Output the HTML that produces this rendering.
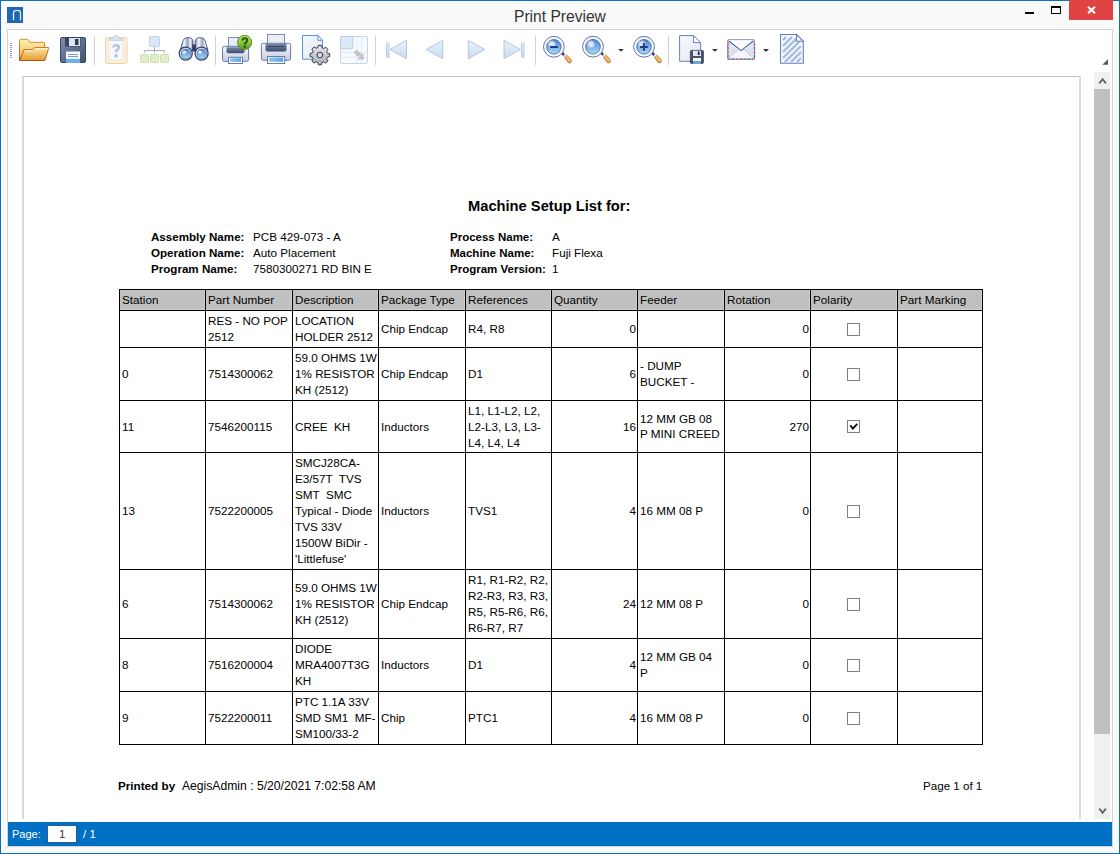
<!DOCTYPE html>
<html><head><meta charset="utf-8">
<style>
*{margin:0;padding:0;box-sizing:border-box}
html,body{width:1120px;height:854px;overflow:hidden;background:#fafafa;font-family:"Liberation Sans",sans-serif}
.abs{position:absolute}
.cell{display:flex;align-items:center;font-size:11.7px;line-height:16px;color:#000;white-space:pre}
.cell span{display:block;width:100%}
.cb{width:13px;height:13px;border:1px solid #808080;background:#fff}
.t{position:absolute;white-space:nowrap;color:#000}
</style></head><body>
<div class="abs" style="left:0;top:0;width:1120px;height:1px;background:#0b6fc7"></div>
<div class="abs" style="left:0;top:0;width:1px;height:854px;background:#0b6fc7"></div>
<div class="abs" style="left:1119px;top:0;width:1px;height:854px;background:#0b6fc7"></div>
<div class="abs" style="left:0;top:853px;width:1120px;height:1px;background:#0b6fc7"></div>
<svg class="abs" style="left:7px;top:7px" width="16" height="16" viewBox="0 0 16 16"><rect width="16" height="16" fill="#1f68b4"/><path d="M6.5 13.3V6Q6.5 3.5 9 3.5H11Q13.5 3.5 13.5 6V13.3" fill="none" stroke="#fff" stroke-width="1.2"/></svg>
<div class="t" style="left:514px;top:8px;font-size:15.6px;line-height:18px;color:#333">Print Preview</div>
<div class="abs" style="left:1025px;top:12px;width:9px;height:2px;background:#000"></div>
<div class="abs" style="left:1051px;top:6px;width:10px;height:8px;border:1px solid #000;border-top-width:2px"></div>
<div class="abs" style="left:1069px;top:0;width:44px;height:20px;background:#e04343"></div>
<svg class="abs" style="left:1087px;top:6px" width="9" height="8" viewBox="0 0 9 8"><path d="M1 0.7L8 7.3M8 0.7L1 7.3" stroke="#fff" stroke-width="2"/></svg>
<div class="abs" style="left:7px;top:29px;width:1106px;height:818px;background:#fff;border:1px solid #d4d4d4"></div>
<svg class="abs" style="left:0;top:0" width="1120" height="76" viewBox="0 0 1120 76">
<defs>
<linearGradient id="gFold" x1="0" y1="0" x2="0" y2="1"><stop offset="0" stop-color="#fff0b0"/><stop offset="1" stop-color="#f0b050"/></linearGradient>
<linearGradient id="gFoldS" gradientUnits="userSpaceOnUse" x1="0" y1="39" x2="0" y2="61"><stop offset="0" stop-color="#d8913a"/><stop offset="1" stop-color="#a9581c"/></linearGradient>
<linearGradient id="gFold2" x1="0" y1="0" x2="0" y2="1"><stop offset="0" stop-color="#fde8a8"/><stop offset="1" stop-color="#e8982e"/></linearGradient>
<linearGradient id="gFlop" x1="0" y1="0" x2="1" y2="1"><stop offset="0" stop-color="#7f8fae"/><stop offset="1" stop-color="#44506e"/></linearGradient>
<linearGradient id="gBarrel" x1="0" y1="0" x2="1" y2="0"><stop offset="0" stop-color="#7c88a4"/><stop offset="0.3" stop-color="#f8faff"/><stop offset="0.55" stop-color="#9aa6bf"/><stop offset="0.8" stop-color="#eef2f8"/><stop offset="1" stop-color="#5a6686"/></linearGradient>
<radialGradient id="gHi" cx="0.5" cy="0.5" r="0.5"><stop offset="0" stop-color="#f4f0fa" stop-opacity="1"/><stop offset="0.6" stop-color="#e4e6f6" stop-opacity="0.8"/><stop offset="1" stop-color="#d8e0f4" stop-opacity="0"/></radialGradient>
<linearGradient id="gSilver" x1="0" y1="0" x2="1" y2="0"><stop offset="0" stop-color="#e8edf5"/><stop offset="1" stop-color="#b8c4d8"/></linearGradient>
<linearGradient id="gLens" x1="0" y1="0" x2="0" y2="1"><stop offset="0" stop-color="#4f82d8"/><stop offset="1" stop-color="#a8dcf0"/></linearGradient>
<linearGradient id="gPrn" x1="0" y1="0" x2="0" y2="1"><stop offset="0" stop-color="#f4f6fb"/><stop offset="1" stop-color="#c4cde2"/></linearGradient>
<linearGradient id="gSlot" x1="0" y1="0" x2="0" y2="1"><stop offset="0" stop-color="#7888a8"/><stop offset="1" stop-color="#3e4a6c"/></linearGradient>
<linearGradient id="gTray" x1="0" y1="0" x2="1" y2="0"><stop offset="0" stop-color="#8ec8f0"/><stop offset="1" stop-color="#5aa0e0"/></linearGradient>
<linearGradient id="gGreen" x1="0" y1="0" x2="0" y2="1"><stop offset="0" stop-color="#b8e468"/><stop offset="0.5" stop-color="#8cc83a"/><stop offset="1" stop-color="#5e9a22"/></linearGradient>
<linearGradient id="gNav" x1="0" y1="0" x2="0" y2="1"><stop offset="0" stop-color="#eaf2fb"/><stop offset="1" stop-color="#c8dcf0"/></linearGradient>
<linearGradient id="gGear" x1="0" y1="0" x2="0" y2="1"><stop offset="0" stop-color="#e4e7ec"/><stop offset="1" stop-color="#a8adb6"/></linearGradient>
<linearGradient id="gHandle" x1="0" y1="1" x2="1" y2="0"><stop offset="0" stop-color="#d8882c"/><stop offset="0.6" stop-color="#f4c070"/><stop offset="1" stop-color="#fdf0d0"/></linearGradient>
<linearGradient id="gPage" x1="0" y1="0" x2="1" y2="1"><stop offset="0" stop-color="#f8faff"/><stop offset="1" stop-color="#dfe6f3"/></linearGradient>
</defs>
<!-- grip -->
<g fill="#999"><rect x="10" y="43" width="2" height="1"/><rect x="10" y="45" width="2" height="1"/><rect x="10" y="47" width="2" height="1"/><rect x="10" y="49" width="2" height="1"/><rect x="10" y="51" width="2" height="1"/><rect x="10" y="53" width="2" height="1"/><rect x="10" y="55" width="2" height="1"/><rect x="10" y="57" width="2" height="1"/></g>
<!-- folder -->
<path d="M19.5 40.3Q19.5 39.3 20.5 39.3H27.8L29.8 42.3H43.8Q44.6 42.3 44.6 43.1V47.5H34.6L32.8 49.5H24.2L20.5 60.5H19.5Z" fill="url(#gFold)" stroke="url(#gFoldS)" stroke-width="1"/>
<path d="M24.2 49.5H32.9L34.6 47.5H48.2Q49 47.5 48.7 48.4L44.8 60.5H19.8Z" fill="url(#gFold2)" stroke="url(#gFoldS)" stroke-width="1"/>
<path d="M25 50.6H33.3L35 48.6H47.6" fill="none" stroke="#fff8e0" stroke-width="0.8" opacity="0.9"/>
<!-- floppy -->
<rect x="60.5" y="37.5" width="25" height="25" rx="1.5" fill="url(#gFlop)" stroke="#3c4868"/>
<rect x="65" y="37.5" width="15.5" height="9" fill="#3a4560"/>
<rect x="69" y="38" width="11" height="8" fill="#dfe5ef"/>
<rect x="75" y="39" width="3.5" height="6" fill="#2f3a58"/>
<rect x="66" y="51.5" width="14" height="11" fill="#fbfcff"/>
<rect x="66" y="58.8" width="14" height="3.7" fill="#6ab0e6"/>
<rect x="68" y="54" width="10" height="0.9" fill="#7c88b8"/><rect x="68" y="56" width="10" height="0.9" fill="#7c88b8"/>
<!-- sep -->
<rect x="94" y="36" width="1" height="29" fill="#d0d0d0"/>
<!-- clipboard -->
<rect x="105.5" y="37.5" width="21.5" height="26" rx="1.5" fill="#fcefd6" stroke="#efd3ad"/>
<rect x="109" y="38.5" width="14" height="21.5" fill="#f6f8fc" stroke="#e8e2d8" stroke-width="0.6"/>
<path d="M109.3 40.3Q109.3 38 113 38Q114 35.2 116 35.2Q118 35.2 119 38Q122.7 38 122.7 40.3Z" fill="#e2e7ef" stroke="#bcc4d4" stroke-width="0.8"/>
<path d="M113.5 47.6Q113.5 45.1 116.1 45.1Q118.8 45.1 118.8 47.4Q118.8 48.9 117.2 49.8Q116.1 50.4 116.1 52.4" fill="none" stroke="#b7bfdb" stroke-width="2.3"/>
<circle cx="116.1" cy="55.9" r="1.8" fill="#b7bfdb"/>
<!-- org chart -->
<rect x="149.5" y="36.5" width="10" height="10" rx="1.3" fill="#dae8f6" stroke="#bcd2ec"/>
<path d="M154.5 47V52.7M144.5 52.7V50.5H164.5V52.7" fill="none" stroke="#a8b0c0" stroke-width="1"/>
<rect x="140.5" y="54.5" width="8" height="8" rx="1.2" fill="#e0eecb" stroke="#cadfac"/>
<rect x="150.5" y="54.5" width="8" height="8" rx="1.2" fill="#e0eecb" stroke="#cadfac"/>
<rect x="160.5" y="54.5" width="8" height="8" rx="1.2" fill="#e0eecb" stroke="#cadfac"/>
<!-- binoculars -->
<path d="M180.2 50.5L183 40.8Q183.6 37.6 188 37.6Q192.5 37.6 192.9 40.8L193.2 50.5Z" fill="url(#gBarrel)" stroke="#4a5878" stroke-width="0.9"/>
<path d="M195 50.5L195.3 40.8Q195.7 37.6 200.2 37.6Q204.6 37.6 205.2 40.8L208 50.5Z" fill="url(#gBarrel)" stroke="#4a5878" stroke-width="0.9"/>
<rect x="192.3" y="44.5" width="3.6" height="7" fill="#34405e"/>
<circle cx="185.75" cy="53.6" r="6.5" fill="#f2f5fb" stroke="#35446a" stroke-width="1.3"/>
<circle cx="201.6" cy="53.6" r="6.5" fill="#f2f5fb" stroke="#35446a" stroke-width="1.3"/>
<circle cx="185.9" cy="53.85" r="4.8" fill="url(#gLens)" stroke="#3a62b4" stroke-width="0.6"/>
<circle cx="201.75" cy="53.85" r="4.8" fill="url(#gLens)" stroke="#3a62b4" stroke-width="0.6"/>
<ellipse cx="184.3" cy="52.2" rx="1.9" ry="1.6" fill="#f4eefa" opacity="0.9"/>
<ellipse cx="200.1" cy="52.2" rx="1.9" ry="1.6" fill="#f4eefa" opacity="0.9"/>
<!-- sep -->
<rect x="215" y="36" width="1" height="29" fill="#d0d0d0"/>
<!-- printer help -->
<rect x="228.5" y="37.5" width="10" height="11" fill="#e9edf5" stroke="#7b8ab8"/>
<path d="M224.3 46.3H246.8Q248.6 46.3 248.6 48.3V59.5Q248.6 61.3 246.8 61.3H224.3Q222.5 61.3 222.5 59.5V48.3Q222.5 46.3 224.3 46.3Z" fill="url(#gPrn)" stroke="#6a7aa8"/>
<path d="M226.5 47.2H244.5V51.5Q244.5 53.3 242.7 53.3H228.3Q226.5 53.3 226.5 51.5Z" fill="url(#gSlot)"/>
<rect x="228.5" y="57.3" width="14" height="6.2" fill="#fff" stroke="#6a7aa8"/>
<rect x="230" y="58.3" width="11" height="3.5" fill="url(#gTray)"/>
<circle cx="244.6" cy="42.4" r="7.1" fill="url(#gGreen)" stroke="#4f8a1c" stroke-width="0.9"/>
<path d="M242.4 40.6Q242.4 38.2 244.8 38.2Q247.2 38.2 247.2 40.3Q247.2 41.6 245.9 42.3Q244.8 42.9 244.8 44.6" fill="none" stroke="#2a560e" stroke-width="2"/>
<circle cx="244.8" cy="46.6" r="1.3" fill="#2a560e"/>
<!-- printer -->
<rect x="267.5" y="34.5" width="17" height="12" fill="#e9edf5" stroke="#7b8ab8"/>
<path d="M263.3 43.3H288.7Q290.6 43.3 290.6 45.3V58.5Q290.6 60.3 288.7 60.3H263.3Q261.4 60.3 261.4 58.5V45.3Q261.4 43.3 263.3 43.3Z" fill="url(#gPrn)" stroke="#6a7aa8"/>
<path d="M265.5 43.8H286.5V49.5Q286.5 51.5 284.5 51.5H267.5Q265.5 51.5 265.5 49.5Z" fill="url(#gSlot)"/>
<rect x="268" y="46" width="16" height="0.8" fill="#2f3a58"/>
<rect x="267.5" y="56.5" width="17.2" height="7" fill="#fff" stroke="#6a7aa8"/>
<rect x="269" y="57.5" width="14.2" height="4.3" fill="url(#gTray)"/>
<!-- page setup -->
<path d="M302.5 35.5H317.8L322.5 40.3V59.2H302.5Z" fill="url(#gPage)" stroke="#5b95d6"/>
<path d="M317.8 35.5V40.3H322.5Z" fill="#fff" stroke="#5b95d6"/>
<g transform="translate(319.9 55)">
<path d="M-1.6-9.6H1.6L2.1-7.3L3.9-6.5L5.9-7.8L8.1-5.6L6.8-3.6L7.5-1.8L9.8-1.4V1.6L7.5 2.1L6.7 3.9L8.1 5.9L5.8 8.1L3.8 6.8L2.1 7.5L1.6 9.8H-1.6L-2.1 7.5L-3.9 6.7L-5.9 8.1L-8.1 5.8L-6.8 3.8L-7.5 2.1L-9.8 1.6V-1.6L-7.5-2.1L-6.7-3.9L-8.1-5.9L-5.8-8.1L-3.8-6.8L-2.1-7.5Z" fill="url(#gGear)" stroke="#3c3c3c" stroke-width="1"/>
<circle r="2.8" fill="#d4dbe6" stroke="#444" stroke-width="1.1"/>
</g>
<!-- scale -->
<rect x="340.5" y="36.5" width="27" height="27" rx="1.5" fill="#f7fafe" stroke="#c2d5ec"/>
<rect x="340.5" y="36.5" width="12.3" height="12.3" rx="1" fill="#dde9f8" stroke="#b8cce6"/>
<path d="M356.7 37V63M361.5 37V63M341 52.5H367M341 57.3H367" stroke="#dbe6f4" stroke-width="0.8"/>
<path d="M354.5 51.5L358.5 55.5" stroke="#c4c4c4" stroke-width="3"/>
<path d="M357.1 59.6H363.8V53Z" fill="#c4c4c4"/>
<path d="M355.5 50.5L361 56" stroke="#c4c4c4" stroke-width="3.2"/>
<!-- sep -->
<rect x="375" y="36" width="1" height="29" fill="#d0d0d0"/>
<!-- nav -->
<rect x="386.5" y="42.5" width="2.5" height="15" rx="1" fill="url(#gNav)" stroke="#aac2e0" stroke-width="0.8"/>
<path d="M406.5 40.3V58.7L390 49.5Z" fill="url(#gNav)" stroke="#aac2e0" stroke-width="0.9"/>
<path d="M442.8 40.3V58.7L426.3 49.5Z" fill="url(#gNav)" stroke="#aac2e0" stroke-width="0.9"/>
<path d="M468.3 40.3V58.7L484.8 49.5Z" fill="url(#gNav)" stroke="#aac2e0" stroke-width="0.9"/>
<path d="M504 40.3V58.7L520.5 49.5Z" fill="url(#gNav)" stroke="#aac2e0" stroke-width="0.9"/>
<rect x="521.5" y="42.5" width="2.5" height="15" rx="1" fill="url(#gNav)" stroke="#aac2e0" stroke-width="0.8"/>
<!-- sep -->
<rect x="535" y="36" width="1" height="29" fill="#d0d0d0"/>
<!-- zoom out -->
<path d="M560.8 53.2L562.8 51.6L565.2 54.6L563.2 56.2Z" fill="#34488a"/>
<path d="M564.2 57L566.4 54.8L570.8 59.4Q572 61 570.9 62.4Q569.6 63.6 568.1 62.4Z" fill="url(#gHandle)" stroke="#a8581a" stroke-width="0.7"/>
<path d="M563.3 56.1L565.5 53.9L566.5 54.9L564.3 57.1Z" fill="#f0f4fb"/>
<circle cx="553.9" cy="46.8" r="10.4" fill="#f8f9fd" stroke="#56689a" stroke-width="0.9"/>
<circle cx="553.9" cy="46.8" r="7.3" fill="url(#gLens)" stroke="#3a5fae" stroke-width="0.8"/>
<circle cx="551.8" cy="44.3" r="4.4" fill="url(#gHi)"/>
<rect x="550.1" y="46" width="7.8" height="2" fill="#1c3d8c"/>
<!-- zoom -->
<g transform="translate(39.1 -0.1)">
<path d="M560.8 53.2L562.8 51.6L565.2 54.6L563.2 56.2Z" fill="#34488a"/>
<path d="M564.2 57L566.4 54.8L570.8 59.4Q572 61 570.9 62.4Q569.6 63.6 568.1 62.4Z" fill="url(#gHandle)" stroke="#a8581a" stroke-width="0.7"/>
<path d="M563.3 56.1L565.5 53.9L566.5 54.9L564.3 57.1Z" fill="#f0f4fb"/>
<circle cx="553.9" cy="46.8" r="10.4" fill="#f8f9fd" stroke="#56689a" stroke-width="0.9"/>
<circle cx="553.9" cy="46.8" r="7.3" fill="url(#gLens)" stroke="#3a5fae" stroke-width="0.8"/>
<circle cx="551.8" cy="44.3" r="4.4" fill="url(#gHi)"/>
</g>
<path d="M618.2 49H623.8L621 51.8Z" fill="#333"/>
<!-- zoom in -->
<g transform="translate(90.1 0)">
<path d="M560.8 53.2L562.8 51.6L565.2 54.6L563.2 56.2Z" fill="#34488a"/>
<path d="M564.2 57L566.4 54.8L570.8 59.4Q572 61 570.9 62.4Q569.6 63.6 568.1 62.4Z" fill="url(#gHandle)" stroke="#a8581a" stroke-width="0.7"/>
<path d="M563.3 56.1L565.5 53.9L566.5 54.9L564.3 57.1Z" fill="#f0f4fb"/>
<circle cx="553.9" cy="46.8" r="10.4" fill="#f8f9fd" stroke="#56689a" stroke-width="0.9"/>
<circle cx="553.9" cy="46.8" r="7.3" fill="url(#gLens)" stroke="#3a5fae" stroke-width="0.8"/>
<circle cx="551.8" cy="44.3" r="4.4" fill="url(#gHi)"/>
</g>
<path d="M640 46.9H647.8M643.9 43.1V50.7" stroke="#1c3d8c" stroke-width="2"/>
<!-- sep -->
<rect x="668" y="36" width="1" height="29" fill="#d0d0d0"/>
<!-- export -->
<path d="M679.6 35.6H693.6L700.6 42.6V61.3H679.6Z" fill="url(#gPage)" stroke="#6b7fb8"/>
<path d="M693.6 35.6V42.6H700.6Z" fill="#fff" stroke="#6b7fb8"/>
<rect x="690.4" y="50.4" width="13" height="13" rx="1" fill="#46526f" stroke="#343e58" stroke-width="0.8"/>
<rect x="693" y="50.8" width="8" height="5.2" fill="#e4e9f1"/>
<rect x="697.8" y="51.5" width="1.8" height="3.5" fill="#1e2740"/>
<rect x="693" y="58" width="8" height="5.4" fill="#fbfcff"/>
<rect x="693" y="61" width="8" height="2.4" fill="#5ea8e4"/>
<path d="M712 48.9H717.8L714.9 51.8Z" fill="#333"/>
<!-- envelope -->
<rect x="727.6" y="39.6" width="27" height="19.6" rx="1" fill="#f3f5fa" stroke="#8da0cc" stroke-width="1"/>
<path d="M728.2 41.5L737.8 50.5L728.2 58.6Z" fill="#dde2ee"/>
<path d="M754 41.5L744.4 50.5L754 58.6Z" fill="#dde2ee"/>
<path d="M728.3 58.7L738 49.5M754 58.7L744.3 49.5" stroke="#b8c2da" stroke-width="0.8"/>
<path d="M728.5 40.6L741.1 50.6L753.7 40.6Z" fill="#fbfcfe"/>
<path d="M728.5 40.8L741.1 50.6L753.7 40.8" fill="none" stroke="#4a5fa0" stroke-width="1.1"/>
<path d="M728.1 42.5V59.1H754.5V42.5" fill="none" stroke="#d84a4a" stroke-width="1.2" stroke-dasharray="3 5"/>
<path d="M728.1 42.5V59.1H754.5V42.5" fill="none" stroke="#4a66bc" stroke-width="1.2" stroke-dasharray="3 5" stroke-dashoffset="-4"/>
<path d="M763 49H768.9L766 51.9Z" fill="#333"/>
<!-- watermark -->
<path d="M780.5 34.5H796.5L803.3 41.3V63.3H780.5Z" fill="#f4f6fb" stroke="#6c80ba" stroke-width="1.1"/>
<g stroke="#a6bbe0" stroke-width="2.3">
<path d="M783 40L786 37M783 46L792 37M783 52L797 38M783 58L800 41M785 62L801 46M791 62L801 52M797 62L801 58"/>
</g>
<path d="M796.5 34.5V41.3H803.3Z" fill="#fff" stroke="#6c80ba" stroke-width="1.1"/>
<!-- overflow triangle -->
<path d="M1108 59.3V64.8H1102.3Z" fill="#555"/>
</svg>

<div class="abs" style="left:22px;top:76px;width:1059px;height:760px;background:#fff;border-top:1px solid #c4c4c4;border-left:2px solid #dadada;border-right:2px solid #dadada"></div>
<div class="t" style="left:468px;top:197px;font-size:14.7px;line-height:18px;font-weight:bold">Machine Setup List for:</div>
<div class="t" style="left:151px;top:229px;font-size:11.6px;line-height:16px;font-weight:bold">Assembly Name:</div>
<div class="t" style="left:151px;top:245px;font-size:11.6px;line-height:16px;font-weight:bold">Operation Name:</div>
<div class="t" style="left:151px;top:261px;font-size:11.6px;line-height:16px;font-weight:bold">Program Name:</div>
<div class="t" style="left:253px;top:229px;font-size:11.7px;line-height:16px">PCB 429-073 - A</div>
<div class="t" style="left:253px;top:245px;font-size:11.7px;line-height:16px">Auto Placement</div>
<div class="t" style="left:253px;top:261px;font-size:11.7px;line-height:16px">7580300271 RD BIN E</div>
<div class="t" style="left:450px;top:229px;font-size:11.5px;line-height:16px;font-weight:bold">Process Name:</div>
<div class="t" style="left:450px;top:245px;font-size:11.5px;line-height:16px;font-weight:bold">Machine Name:</div>
<div class="t" style="left:450px;top:261px;font-size:11.5px;line-height:16px;font-weight:bold">Program Version:</div>
<div class="t" style="left:552px;top:229px;font-size:11.7px;line-height:16px">A</div>
<div class="t" style="left:552px;top:245px;font-size:11.7px;line-height:16px">Fuji Flexa</div>
<div class="t" style="left:552px;top:261px;font-size:11.7px;line-height:16px">1</div>
<div class="abs" style="left:119px;top:289px;width:864px;height:21px;background:#c0c0c0"></div>
<div class="abs" style="left:120px;top:290px;width:85px;height:20px;border-right:1px solid #d0d0d0;border-bottom:1px solid #d0d0d0"></div>
<div class="abs" style="left:206px;top:290px;width:86px;height:20px;border-right:1px solid #d0d0d0;border-bottom:1px solid #d0d0d0"></div>
<div class="abs" style="left:293px;top:290px;width:85px;height:20px;border-right:1px solid #d0d0d0;border-bottom:1px solid #d0d0d0"></div>
<div class="abs" style="left:379px;top:290px;width:86px;height:20px;border-right:1px solid #d0d0d0;border-bottom:1px solid #d0d0d0"></div>
<div class="abs" style="left:466px;top:290px;width:85px;height:20px;border-right:1px solid #d0d0d0;border-bottom:1px solid #d0d0d0"></div>
<div class="abs" style="left:552px;top:290px;width:85px;height:20px;border-right:1px solid #d0d0d0;border-bottom:1px solid #d0d0d0"></div>
<div class="abs" style="left:638px;top:290px;width:86px;height:20px;border-right:1px solid #d0d0d0;border-bottom:1px solid #d0d0d0"></div>
<div class="abs" style="left:725px;top:290px;width:85px;height:20px;border-right:1px solid #d0d0d0;border-bottom:1px solid #d0d0d0"></div>
<div class="abs" style="left:811px;top:290px;width:86px;height:20px;border-right:1px solid #d0d0d0;border-bottom:1px solid #d0d0d0"></div>
<div class="abs" style="left:898px;top:290px;width:84px;height:20px;border-right:1px solid #d0d0d0;border-bottom:1px solid #d0d0d0"></div>
<div class="abs" style="left:119px;top:289px;width:864px;height:1px;background:#000"></div>
<div class="abs" style="left:119px;top:310px;width:864px;height:1px;background:#000"></div>
<div class="abs" style="left:119px;top:347px;width:864px;height:1px;background:#000"></div>
<div class="abs" style="left:119px;top:400px;width:864px;height:1px;background:#000"></div>
<div class="abs" style="left:119px;top:452px;width:864px;height:1px;background:#000"></div>
<div class="abs" style="left:119px;top:569px;width:864px;height:1px;background:#000"></div>
<div class="abs" style="left:119px;top:638px;width:864px;height:1px;background:#000"></div>
<div class="abs" style="left:119px;top:691px;width:864px;height:1px;background:#000"></div>
<div class="abs" style="left:119px;top:744px;width:864px;height:1px;background:#000"></div>
<div class="abs" style="left:119px;top:289px;width:1px;height:456px;background:#000"></div>
<div class="abs" style="left:205px;top:289px;width:1px;height:456px;background:#000"></div>
<div class="abs" style="left:292px;top:289px;width:1px;height:456px;background:#000"></div>
<div class="abs" style="left:378px;top:289px;width:1px;height:456px;background:#000"></div>
<div class="abs" style="left:465px;top:289px;width:1px;height:456px;background:#000"></div>
<div class="abs" style="left:551px;top:289px;width:1px;height:456px;background:#000"></div>
<div class="abs" style="left:637px;top:289px;width:1px;height:456px;background:#000"></div>
<div class="abs" style="left:724px;top:289px;width:1px;height:456px;background:#000"></div>
<div class="abs" style="left:810px;top:289px;width:1px;height:456px;background:#000"></div>
<div class="abs" style="left:897px;top:289px;width:1px;height:456px;background:#000"></div>
<div class="abs" style="left:982px;top:289px;width:1px;height:456px;background:#000"></div>
<div class="abs cell" style="left:120px;top:290px;width:85px;height:20px;text-align:left;padding-left:2px;"><span>Station</span></div>
<div class="abs cell" style="left:206px;top:290px;width:86px;height:20px;text-align:left;padding-left:2px;"><span>Part Number</span></div>
<div class="abs cell" style="left:293px;top:290px;width:85px;height:20px;text-align:left;padding-left:2px;"><span>Description</span></div>
<div class="abs cell" style="left:379px;top:290px;width:86px;height:20px;text-align:left;padding-left:2px;"><span>Package Type</span></div>
<div class="abs cell" style="left:466px;top:290px;width:85px;height:20px;text-align:left;padding-left:2px;"><span>References</span></div>
<div class="abs cell" style="left:552px;top:290px;width:85px;height:20px;text-align:left;padding-left:2px;"><span>Quantity</span></div>
<div class="abs cell" style="left:638px;top:290px;width:86px;height:20px;text-align:left;padding-left:2px;"><span>Feeder</span></div>
<div class="abs cell" style="left:725px;top:290px;width:85px;height:20px;text-align:left;padding-left:2px;"><span>Rotation</span></div>
<div class="abs cell" style="left:811px;top:290px;width:86px;height:20px;text-align:left;padding-left:2px;"><span>Polarity</span></div>
<div class="abs cell" style="left:898px;top:290px;width:84px;height:20px;text-align:left;padding-left:2px;"><span>Part Marking</span></div>
<div class="abs cell" style="left:206px;top:311px;width:86px;height:36px;text-align:left;padding-left:2px;"><span>RES - NO POP<br>2512</span></div>
<div class="abs cell" style="left:293px;top:311px;width:85px;height:36px;text-align:left;padding-left:2px;"><span>LOCATION<br>HOLDER 2512</span></div>
<div class="abs cell" style="left:379px;top:311px;width:86px;height:36px;text-align:left;padding-left:2px;"><span>Chip Endcap</span></div>
<div class="abs cell" style="left:466px;top:311px;width:85px;height:36px;text-align:left;padding-left:2px;"><span>R4, R8</span></div>
<div class="abs cell" style="left:552px;top:311px;width:85px;height:36px;text-align:right;padding-right:1px;"><span>0</span></div>
<div class="abs cell" style="left:725px;top:311px;width:85px;height:36px;text-align:right;padding-right:1px;"><span>0</span></div>
<div class="abs cb" style="left:847px;top:323px"></div>
<div class="abs cell" style="left:120px;top:348px;width:85px;height:52px;text-align:left;padding-left:2px;"><span>0</span></div>
<div class="abs cell" style="left:206px;top:348px;width:86px;height:52px;text-align:left;padding-left:2px;"><span>7514300062</span></div>
<div class="abs cell" style="left:293px;top:348px;width:85px;height:52px;text-align:left;padding-left:2px;"><span>59.0 OHMS 1W<br>1% RESISTOR<br>KH (2512)</span></div>
<div class="abs cell" style="left:379px;top:348px;width:86px;height:52px;text-align:left;padding-left:2px;"><span>Chip Endcap</span></div>
<div class="abs cell" style="left:466px;top:348px;width:85px;height:52px;text-align:left;padding-left:2px;"><span>D1</span></div>
<div class="abs cell" style="left:552px;top:348px;width:85px;height:52px;text-align:right;padding-right:1px;"><span>6</span></div>
<div class="abs cell" style="left:638px;top:348px;width:86px;height:52px;text-align:left;padding-left:2px;"><span>- DUMP<br>BUCKET -</span></div>
<div class="abs cell" style="left:725px;top:348px;width:85px;height:52px;text-align:right;padding-right:1px;"><span>0</span></div>
<div class="abs cb" style="left:847px;top:368px"></div>
<div class="abs cell" style="left:120px;top:401px;width:85px;height:51px;text-align:left;padding-left:2px;"><span>11</span></div>
<div class="abs cell" style="left:206px;top:401px;width:86px;height:51px;text-align:left;padding-left:2px;"><span>7546200115</span></div>
<div class="abs cell" style="left:293px;top:401px;width:85px;height:51px;text-align:left;padding-left:2px;"><span>CREE  KH</span></div>
<div class="abs cell" style="left:379px;top:401px;width:86px;height:51px;text-align:left;padding-left:2px;"><span>Inductors</span></div>
<div class="abs cell" style="left:466px;top:401px;width:85px;height:51px;text-align:left;padding-left:2px;"><span>L1, L1-L2, L2,<br>L2-L3, L3, L3-<br>L4, L4, L4</span></div>
<div class="abs cell" style="left:552px;top:401px;width:85px;height:51px;text-align:right;padding-right:1px;"><span>16</span></div>
<div class="abs cell" style="left:638px;top:401px;width:86px;height:51px;text-align:left;padding-left:2px;line-height:15px;padding-bottom:2px"><span>12 MM GB 08<br>P MINI CREED</span></div>
<div class="abs cell" style="left:725px;top:401px;width:85px;height:51px;text-align:right;padding-right:1px;"><span>270</span></div>
<div class="abs cb" style="left:847px;top:420px"></div><svg class="abs" style="left:847px;top:420px" width="13" height="13" viewBox="0 0 13 13"><path d="M3.3 5.2L5.8 8.6L10.3 3.8" fill="none" stroke="#000" stroke-width="1.7"/></svg>
<div class="abs cell" style="left:120px;top:453px;width:85px;height:116px;text-align:left;padding-left:2px;"><span>13</span></div>
<div class="abs cell" style="left:206px;top:453px;width:86px;height:116px;text-align:left;padding-left:2px;"><span>7522200005</span></div>
<div class="abs cell" style="left:293px;top:453px;width:85px;height:116px;text-align:left;padding-left:2px;"><span>SMCJ28CA-<br>E3/57T  TVS<br>SMT  SMC<br>Typical - Diode<br>TVS 33V<br>1500W BiDir -<br>&#39;Littlefuse&#39;</span></div>
<div class="abs cell" style="left:379px;top:453px;width:86px;height:116px;text-align:left;padding-left:2px;"><span>Inductors</span></div>
<div class="abs cell" style="left:466px;top:453px;width:85px;height:116px;text-align:left;padding-left:2px;"><span>TVS1</span></div>
<div class="abs cell" style="left:552px;top:453px;width:85px;height:116px;text-align:right;padding-right:1px;"><span>4</span></div>
<div class="abs cell" style="left:638px;top:453px;width:86px;height:116px;text-align:left;padding-left:2px;"><span>16 MM 08 P</span></div>
<div class="abs cell" style="left:725px;top:453px;width:85px;height:116px;text-align:right;padding-right:1px;"><span>0</span></div>
<div class="abs cb" style="left:847px;top:505px"></div>
<div class="abs cell" style="left:120px;top:570px;width:85px;height:68px;text-align:left;padding-left:2px;"><span>6</span></div>
<div class="abs cell" style="left:206px;top:570px;width:86px;height:68px;text-align:left;padding-left:2px;"><span>7514300062</span></div>
<div class="abs cell" style="left:293px;top:570px;width:85px;height:68px;text-align:left;padding-left:2px;"><span>59.0 OHMS 1W<br>1% RESISTOR<br>KH (2512)</span></div>
<div class="abs cell" style="left:379px;top:570px;width:86px;height:68px;text-align:left;padding-left:2px;"><span>Chip Endcap</span></div>
<div class="abs cell" style="left:466px;top:570px;width:85px;height:68px;text-align:left;padding-left:2px;"><span>R1, R1-R2, R2,<br>R2-R3, R3, R3,<br>R5, R5-R6, R6,<br>R6-R7, R7</span></div>
<div class="abs cell" style="left:552px;top:570px;width:85px;height:68px;text-align:right;padding-right:1px;"><span>24</span></div>
<div class="abs cell" style="left:638px;top:570px;width:86px;height:68px;text-align:left;padding-left:2px;"><span>12 MM 08 P</span></div>
<div class="abs cell" style="left:725px;top:570px;width:85px;height:68px;text-align:right;padding-right:1px;"><span>0</span></div>
<div class="abs cb" style="left:847px;top:598px"></div>
<div class="abs cell" style="left:120px;top:639px;width:85px;height:52px;text-align:left;padding-left:2px;"><span>8</span></div>
<div class="abs cell" style="left:206px;top:639px;width:86px;height:52px;text-align:left;padding-left:2px;"><span>7516200004</span></div>
<div class="abs cell" style="left:293px;top:639px;width:85px;height:52px;text-align:left;padding-left:2px;"><span>DIODE<br>MRA4007T3G<br>KH</span></div>
<div class="abs cell" style="left:379px;top:639px;width:86px;height:52px;text-align:left;padding-left:2px;"><span>Inductors</span></div>
<div class="abs cell" style="left:466px;top:639px;width:85px;height:52px;text-align:left;padding-left:2px;"><span>D1</span></div>
<div class="abs cell" style="left:552px;top:639px;width:85px;height:52px;text-align:right;padding-right:1px;"><span>4</span></div>
<div class="abs cell" style="left:638px;top:639px;width:86px;height:52px;text-align:left;padding-left:2px;"><span>12 MM GB 04<br>P</span></div>
<div class="abs cell" style="left:725px;top:639px;width:85px;height:52px;text-align:right;padding-right:1px;"><span>0</span></div>
<div class="abs cb" style="left:847px;top:659px"></div>
<div class="abs cell" style="left:120px;top:692px;width:85px;height:52px;text-align:left;padding-left:2px;"><span>9</span></div>
<div class="abs cell" style="left:206px;top:692px;width:86px;height:52px;text-align:left;padding-left:2px;"><span>7522200011</span></div>
<div class="abs cell" style="left:293px;top:692px;width:85px;height:52px;text-align:left;padding-left:2px;"><span>PTC 1.1A 33V<br>SMD SM1  MF-<br>SM100/33-2</span></div>
<div class="abs cell" style="left:379px;top:692px;width:86px;height:52px;text-align:left;padding-left:2px;"><span>Chip</span></div>
<div class="abs cell" style="left:466px;top:692px;width:85px;height:52px;text-align:left;padding-left:2px;"><span>PTC1</span></div>
<div class="abs cell" style="left:552px;top:692px;width:85px;height:52px;text-align:right;padding-right:1px;"><span>4</span></div>
<div class="abs cell" style="left:638px;top:692px;width:86px;height:52px;text-align:left;padding-left:2px;"><span>16 MM 08 P</span></div>
<div class="abs cell" style="left:725px;top:692px;width:85px;height:52px;text-align:right;padding-right:1px;"><span>0</span></div>
<div class="abs cb" style="left:847px;top:712px"></div>
<div class="t" style="left:118px;top:778px;font-size:11.7px;line-height:16px;font-weight:bold">Printed by</div>
<div class="t" style="left:182px;top:778px;font-size:12.15px;line-height:16px">AegisAdmin : 5/20/2021 7:02:58 AM</div>
<div class="t" style="left:923px;top:778px;font-size:11.6px;line-height:16px">Page 1 of 1</div>
<div class="abs" style="left:1094px;top:72px;width:16px;height:747px;background:#f0f0f0"></div>
<div class="abs" style="left:1094px;top:89px;width:16px;height:645px;background:#c0c0c0"></div>
<svg class="abs" style="left:1094px;top:72px" width="16" height="747" viewBox="0 0 16 747"><path d="M5.3 11.4L8.6 7.2L11.9 11.4" fill="none" stroke="#606060" stroke-width="1.7"/><path d="M5.3 736.6L8.6 740.8L11.9 736.6" fill="none" stroke="#606060" stroke-width="1.7"/></svg>
<div class="abs" style="left:8px;top:819px;width:1104px;height:3px;background:#fff"></div>
<div class="abs" style="left:8px;top:822px;width:1104px;height:24px;background:#0070c4"></div>
<div class="t" style="left:12px;top:826px;font-size:11px;line-height:16px;color:#fff">Page:</div>
<div class="abs" style="left:47px;top:825px;width:30px;height:18px;background:#fff;border:1px solid #2a5c8c"></div>
<div class="t" style="left:59px;top:826px;font-size:11.5px;line-height:16px;color:#333">1</div>
<div class="t" style="left:83px;top:826px;font-size:11.5px;line-height:16px;color:#fff">/ 1</div>
</body></html>
